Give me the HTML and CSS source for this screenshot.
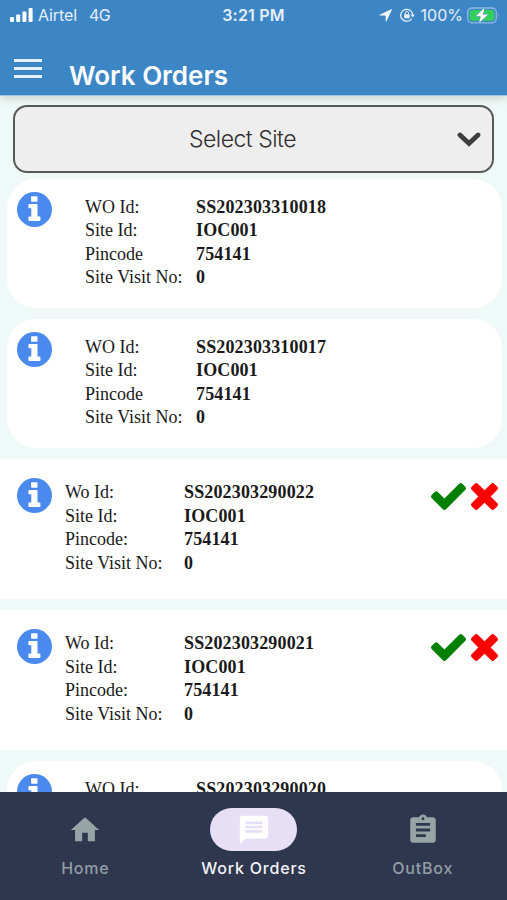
FILE: index.html
```html
<!DOCTYPE html>
<html lang="en">

<head>
    <meta charset="UTF-8">
    <meta name="viewport" content="width=device-width, initial-scale=1.0">
    <title>Work Orders</title>
    <link rel="stylesheet" href="styles.css">
</head>

<body>
    <!-- shared icons -->
    <svg class="sprite">
        <symbol id="info" viewBox="0 0 35 35">
            <circle cx="17.5" cy="17.5" r="17.5" fill="#4a89ee" />
            <path fill="#fff" d="M14.7 4.2h5.2q.6 0 .6.6v4.3q0 .6-.6.6h-5.2q-.6 0-.6-.6V4.800q0-.6.6-.6zM12.200 12h7.7q.6 0 .6.600v11.800h2.100q.8 0 .8.800v3q0 .8-.8.800H12.200q-.8 0-.8-.8v-3q0-.8.8-.8h2.100v-8.200h-2.100q-.8 0-.8-.8V12.800q0-.8.8-.8z" />
        </symbol>
        <symbol id="check" viewBox="121 334 1550 1188">
            <path d="M1671 566q0 40-28 68l-724 724-136 136q-28 28-68 28t-68-28l-136-136-362-362q-28-28-28-68t28-68l136-136q28-28 68-28t68 28l294 295 656-657q28-28 68-28t68 28l136 136q28 28 28 68z" />
        </symbol>
        <symbol id="times" viewBox="302 366 1188 1188">
            <path d="M1490 1322q0 40-28 68l-136 136q-28 28-68 28t-68-28l-294-294-294 294q-28 28-68 28t-68-28l-136-136q-28-28-28-68t28-68l294-294-294-294q-28-28-28-68t28-68l136-136q28-28 68-28t68 28l294 294 294-294q28-28 68-28t68 28l136 136q28 28 28 68t-28 68l-294 294 294 294q28 28 28 68z" />
        </symbol>
    </svg>

    <div class="app">
        <header class="header">
            <div class="status">
                <div class="status-left">
                    <svg width="23" height="14" viewBox="0 0 23 14" fill="#fff">
                        <rect x="0" y="9" width="4" height="5" rx="1" />
                        <rect x="6.200" y="6.500" width="4" height="7.500" rx="1" />
                        <rect x="12.400" y="3.500" width="4" height="10.500" rx="1" />
                        <rect x="18.600" y="0" width="4" height="14" rx="1" />
                    </svg>
                    <span class="carrier">Airtel</span>
                    <span class="network">4G</span>
                </div>
                <div class="time">3:21 PM</div>
                <div class="status-right">
                    <svg width="13" height="13" viewBox="0 0 13 13" fill="#fff">
                        <path d="M12.300.3Q13 .1 12.700.9L7.500 12.200q-.6 1-.8-.1V6.500H.9q-1-.2-.1-.7z" />
                    </svg>
                    <svg class="lock" width="15" height="14" viewBox="0 0 15 14">
                        <path d="M11.600 10.800A6 6 0 1 1 12.700 7" fill="none" stroke="#e6eff9" stroke-width="1.300" />
                        <path d="M10.600 6.500h4.200l-2.100 3z" fill="#e6eff9" />
                        <rect x="4.100" y="6.300" width="5.600" height="4" rx=".6" fill="#e6eff9" />
                        <path d="M5.200 6.500V5.200a1.700 1.700 0 0 1 3.400 0v1.300" fill="none" stroke="#e6eff9" />
                    </svg>
                    <span class="percent">100%</span>
                    <svg width="33" height="17" viewBox="0 0 33 17">
                        <rect x=".7" y="1" width="28.600" height="14.800" rx="4.200" fill="none" stroke="#8fbae2" stroke-width="1.300" />
                        <path d="M31 6q1.800 2.400 0 4.800z" fill="#8fbae2" />
                        <rect x="2.700" y="3" width="24.600" height="10.800" rx="2.500" fill="#34cf5a" />
                        <path d="M17.500.8 8.700 9.300h5L12 16.100l9.100-8.700h-5.200z" fill="#fff" stroke="#3c86c6" stroke-width="1" paint-order="stroke" />
                    </svg>
                </div>
            </div>
            <div class="title-bar">
                <div class="menu"><i></i><i></i><i></i></div>
                <h1>Work Orders</h1>
            </div>
        </header>

        <main class="content">
            <div class="select">
                <span>Select Site</span>
                <svg width="24" height="16" viewBox="0 0 24 16">
                    <path d="M3 4l9 8.500L21 4" fill="none" stroke="#3e3e3e" stroke-width="4.800" stroke-linecap="round" />
                </svg>
            </div>

            <section class="card rounded">
                <svg class="info"><use href="#info" /></svg>
                <dl>
                    <dt>WO Id:</dt><dd>SS202303310018</dd>
                    <dt>Site Id:</dt><dd>IOC001</dd>
                    <dt>Pincode</dt><dd>754141</dd>
                    <dt>Site Visit No:</dt><dd>0</dd>
                </dl>
            </section>

            <section class="card rounded">
                <svg class="info"><use href="#info" /></svg>
                <dl>
                    <dt>WO Id:</dt><dd>SS202303310017</dd>
                    <dt>Site Id:</dt><dd>IOC001</dd>
                    <dt>Pincode</dt><dd>754141</dd>
                    <dt>Site Visit No:</dt><dd>0</dd>
                </dl>
            </section>

            <section class="card pending">
                <svg class="info"><use href="#info" /></svg>
                <dl>
                    <dt>Wo Id:</dt><dd>SS202303290022</dd>
                    <dt>Site Id:</dt><dd>IOC001</dd>
                    <dt>Pincode:</dt><dd>754141</dd>
                    <dt>Site Visit No:</dt><dd>0</dd>
                </dl>
                <div class="actions">
                    <svg class="accept"><use href="#check" /></svg>
                    <svg class="reject"><use href="#times" /></svg>
                </div>
            </section>

            <section class="card pending">
                <svg class="info"><use href="#info" /></svg>
                <dl>
                    <dt>Wo Id:</dt><dd>SS202303290021</dd>
                    <dt>Site Id:</dt><dd>IOC001</dd>
                    <dt>Pincode:</dt><dd>754141</dd>
                    <dt>Site Visit No:</dt><dd>0</dd>
                </dl>
                <div class="actions">
                    <svg class="accept"><use href="#check" /></svg>
                    <svg class="reject"><use href="#times" /></svg>
                </div>
            </section>

            <section class="card rounded">
                <svg class="info"><use href="#info" /></svg>
                <dl>
                    <dt>WO Id:</dt><dd>SS202303290020</dd>
                </dl>
            </section>
        </main>

        <nav class="tabs">
            <div class="tab">
                <div class="pill">
                    <svg viewBox="0 0 24 24"><path d="M10 20v-6h4v6h5v-8h3L12 3 2 12h3v8z" /></svg>
                </div>
                <span>Home</span>
            </div>
            <div class="tab active">
                <div class="pill">
                    <svg viewBox="0 0 24 24"><path d="M20 2H4c-1.100 0-1.990.9-1.990 2L2 22l4-4h14c1.100 0 2-.9 2-2V4c0-1.100-.9-2-2-2zm-2 12H6v-2h12v2zm0-3H6V9h12v2zm0-3H6V6h12v2z" /></svg>
                </div>
                <span>Work Orders</span>
            </div>
            <div class="tab">
                <div class="pill">
                    <svg viewBox="0 0 24 24"><path d="M19 3h-4.180C14.400 1.840 13.300 1 12 1c-1.300 0-2.400.84-2.820 2H5c-1.100 0-2 .9-2 2v14c0 1.100.9 2 2 2h14c1.100 0 2-.9 2-2V5c0-1.100-.9-2-2-2zm-7 0c.55 0 1 .45 1 1s-.45 1-1 1-1-.45-1-1 .45-1 1-1zm2 14H7v-2h7v2zm3-4H7v-2h10v2zm0-4H7V7h10v2z" /></svg>
                </div>
                <span>OutBox</span>
            </div>
        </nav>
    </div>
</body>

</html>
```
FILE: styles.css
```css
* {
    margin: 0;
    padding: 0;
    box-sizing: border-box;
}

body {
    font-family: Inter, "Liberation Sans", sans-serif;
    overflow: hidden;
}

svg {
    display: block;
    flex-shrink: 0;
}

.sprite {
    display: none;
}

.app {
    height: 900px;
    display: flex;
    flex-direction: column;
    background: #eff9f7;
}

/* header */
.header {
    height: 96px;
    flex-shrink: 0;
    background: #3c86c6;
    border-bottom: 1px solid #a3c7ea;
    color: #fff;
    box-shadow: 0 1px 10px rgba(60, 60, 40, 0.25);
    z-index: 1;
}

.status {
    height: 30px;
    padding: 0 8px 0 10px;
    display: grid;
    grid-template-columns: 1fr auto 1fr;
    align-items: center;
    font-size: 16px;
    color: #e6eff9;
}

.status-left,
.status-right {
    display: flex;
    align-items: center;
}

.status-right {
    justify-content: flex-end;
    margin-right: -1px;
}

.carrier {
    margin-left: 5px;
    letter-spacing: -0.1px;
}

.network {
    margin-left: 12px;
    letter-spacing: -0.5px;
}

.time {
    margin-left: -2px;
    font-weight: 600;
    font-size: 16px;
    letter-spacing: 0.2px;
}

.lock {
    margin: 0 6px 0 8px;
}

.percent {
    margin-right: 4px;
}

.title-bar {
    display: flex;
    align-items: flex-start;
    padding: 29px 14px 0;
}

.menu {
    width: 28px;
    display: flex;
    flex-direction: column;
    gap: 5px;
}

.menu i {
    height: 3px;
    background: #e6f0fa;
}

h1 {
    margin: 1px 0 0 27px;
    font-size: 26px;
    line-height: 32px;
    font-weight: 600;
    letter-spacing: 0;
}

/* list */
.content {
    flex: 1;
    min-height: 0;
    overflow: hidden;
    padding-top: 9px;
    display: flex;
    flex-direction: column;
}

.select {
    height: 68px;
    flex-shrink: 0;
    margin: 0 13px 6px;
    padding: 0 11px;
    border: 2px solid #565b59;
    border-radius: 14px;
    background: #eee;
    display: flex;
    align-items: center;
    color: #303030;
    font-size: 23px;
    font-weight: 300;
}

.select span {
    flex: 1;
    padding-left: 2px;
    text-align: center;
    letter-spacing: -0.5px;
}

.card {
    flex-shrink: 0;
    margin-bottom: 11px;
    background: #fff;
    display: flex;
    align-items: flex-start;
    color: #1a1a1a;
    font: 18px/23.600px "Liberation Serif", serif;
}

.card.rounded {
    height: 129px;
    margin-left: 7px;
    margin-right: 5px;
    padding: 13px 10px;
    border-radius: 29px;
}

.card.pending {
    height: 140px;
    padding: 19px 9px 0 17px;
}

.info {
    width: 35px;
    height: 35px;
}

dl {
    display: grid;
    grid-template-columns: 111px auto;
    margin: 3.500px 0 0 33px;
}

.pending dl {
    grid-template-columns: 119px auto;
    margin: 3px 0 0 13px;
}

dt {
    letter-spacing: 0;
}

dd {
    font-weight: bold;
    letter-spacing: 0.15px;
}

.actions {
    margin: 5px 0 0 auto;
    display: flex;
    gap: 5px;
}

.accept {
    width: 35px;
    height: 27px;
    fill: #008000;
}

.reject {
    width: 27px;
    height: 27px;
    fill: #f00;
}

/* bottom tabs */
.tabs {
    height: 108px;
    flex-shrink: 0;
    background: #2e374e;
    display: grid;
    grid-template-columns: repeat(3, 1fr);
    padding: 16px 0 0 1px;
    z-index: 1;
}

.tab {
    display: flex;
    flex-direction: column;
    align-items: center;
    color: #929da5;
    fill: #95a5a6;
    font-size: 16px;
    line-height: 20px;
    font-weight: 500;
    letter-spacing: 0.8px;
}

.pill {
    width: 87px;
    height: 43px;
    margin-bottom: 7px;
    border-radius: 22px;
    display: flex;
    align-items: center;
    justify-content: center;
}

.pill svg {
    width: 34px;
    height: 34px;
}

.active {
    color: #f3f4f8;
    fill: #fff;
}

.active .pill {
    background: #e7dff6;
}
```
